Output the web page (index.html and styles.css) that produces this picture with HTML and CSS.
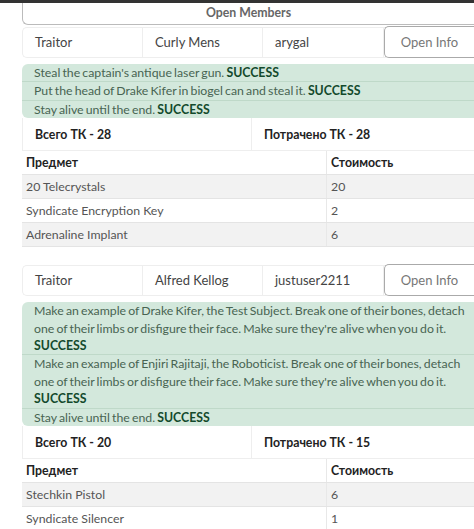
FILE: index.html
```html
<!DOCTYPE html>
<html lang="en">
<head>
    <meta charset="UTF-8">
    <meta name="viewport" content="width=device-width, initial-scale=1.0">
    <title>Open Members</title>
    <link rel="stylesheet" href="styles.css">
</head>
<body>
    <div class="topbar"></div>
    <div class="page">
        <div class="members-title">Open Members</div>

        <div class="member">
            <div class="member-row">
                <div class="cell">Traitor</div>
                <div class="cell">Curly Mens</div>
                <div class="cell">arygal</div>
                <button class="info-btn">Open Info</button>
            </div>
            <div class="objectives">
                <div class="objective">Steal the captain's antique laser gun. <b>SUCCESS</b></div>
                <div class="objective">Put the head of Drake Kifer in biogel can and steal it. <b>SUCCESS</b></div>
                <div class="objective">Stay alive until the end. <b>SUCCESS</b></div>
            </div>
            <div class="tc-row">
                <div class="tc-cell">Всего ТК - 28</div>
                <div class="tc-cell">Потрачено ТК - 28</div>
            </div>
            <table class="items">
                <tr><th>Предмет</th><th>Стоимость</th></tr>
                <tr><td>20 Telecrystals</td><td>20</td></tr>
                <tr><td>Syndicate Encryption Key</td><td>2</td></tr>
                <tr><td>Adrenaline Implant</td><td>6</td></tr>
            </table>
        </div>

        <div class="member">
            <div class="member-row">
                <div class="cell">Traitor</div>
                <div class="cell">Alfred Kellog</div>
                <div class="cell">justuser2211</div>
                <button class="info-btn">Open Info</button>
            </div>
            <div class="objectives">
                <div class="objective">Make an example of Drake Kifer, the Test Subject. Break one of their bones, detach one of their limbs or disfigure their face. Make sure they're alive when you do it. <b>SUCCESS</b></div>
                <div class="objective">Make an example of Enjiri Rajitaji, the Roboticist. Break one of their bones, detach one of their limbs or disfigure their face. Make sure they're alive when you do it. <b>SUCCESS</b></div>
                <div class="objective">Stay alive until the end. <b>SUCCESS</b></div>
            </div>
            <div class="tc-row">
                <div class="tc-cell">Всего ТК - 20</div>
                <div class="tc-cell">Потрачено ТК - 15</div>
            </div>
            <table class="items">
                <tr><th>Предмет</th><th>Стоимость</th></tr>
                <tr><td>Stechkin Pistol</td><td>6</td></tr>
                <tr><td>Syndicate Silencer</td><td>1</td></tr>
            </table>
        </div>
    </div>
</body>
</html>
```

FILE: styles.css
```css
body {
    font-family: 'Lato', 'Open Sans', sans-serif;
    font-size: 12px;
    margin: 0;
    padding: 0;
    background: #fff;
    color: #444;
    overflow: hidden;
}

.topbar {
    height: 3px;
    background-color: #333;
}

.page {
    margin-left: 22px;
}

.members-title {
    height: 21px;
    line-height: 19px;
    border: 1px solid #bbb;
    border-top: none;
    border-right: none;
    border-bottom-left-radius: 6px;
    text-align: center;
    font-weight: bold;
    font-size: 12.3px;
    color: #666;
}

.member {
    margin-bottom: 18px;
}

.member-row {
    display: grid;
    grid-template-columns: 120px 120px 121px 1fr;
    height: 29px;
    margin-top: 2px;
    border: 1px solid #eee;
    border-right: none;
    border-radius: 5px 0 0 5px;
    font-size: 13px;
}

.cell {
    padding-left: 12px;
    line-height: 28px;
    border-right: 1px solid #eee;
    color: #444;
}

.info-btn {
    font-family: inherit;
    font-size: 13px;
    color: #777;
    background: #fff;
    border: 1px solid #aaa;
    border-right: none;
    border-radius: 5px 0 0 5px;
    margin: -2px 0 -1px 0;
}

.objectives {
    margin: 6px -8px 0 0;
    background-color: #d3e8dc;
    border-radius: 6px 0 0 6px;
    color: #486452;
    font-size: 12.3px;
    word-spacing: -1px;
}

.objective {
    padding: 0 12px;
    line-height: 17.4px;
    border-bottom: 1px solid #bfd9c9;
}

.objective:last-child {
    border-bottom: none;
}

.objective b {
    color: #134a2c;
}

.tc-row {
    display: grid;
    grid-template-columns: 228px 1fr;
    height: 32px;
    border: 1px solid #eee;
    border-right: none;
    border-top: none;
    font-size: 12.3px;
}

.tc-cell {
    padding: 3px 0 0 12px;
    line-height: 28px;
    font-weight: bold;
    color: #222;
}

.tc-cell + .tc-cell {
    border-left: 1px solid #eee;
}

.items {
    width: 100%;
    border-collapse: collapse;
    font-size: 12.3px;
}

.items th, .items td {
    text-align: left;
    padding: 0 4px;
    height: 23px;
    border-bottom: 1px solid #e4e4e4;
}

.items th {
    color: #222;
}

.items td + td, .items th + th {
    border-left: 1px solid #e8e8e8;
    width: 139px;
}

.items tr:nth-child(even) td {
    background-color: #f2f2f2;
}

.items td {
    color: #555;
}
```
